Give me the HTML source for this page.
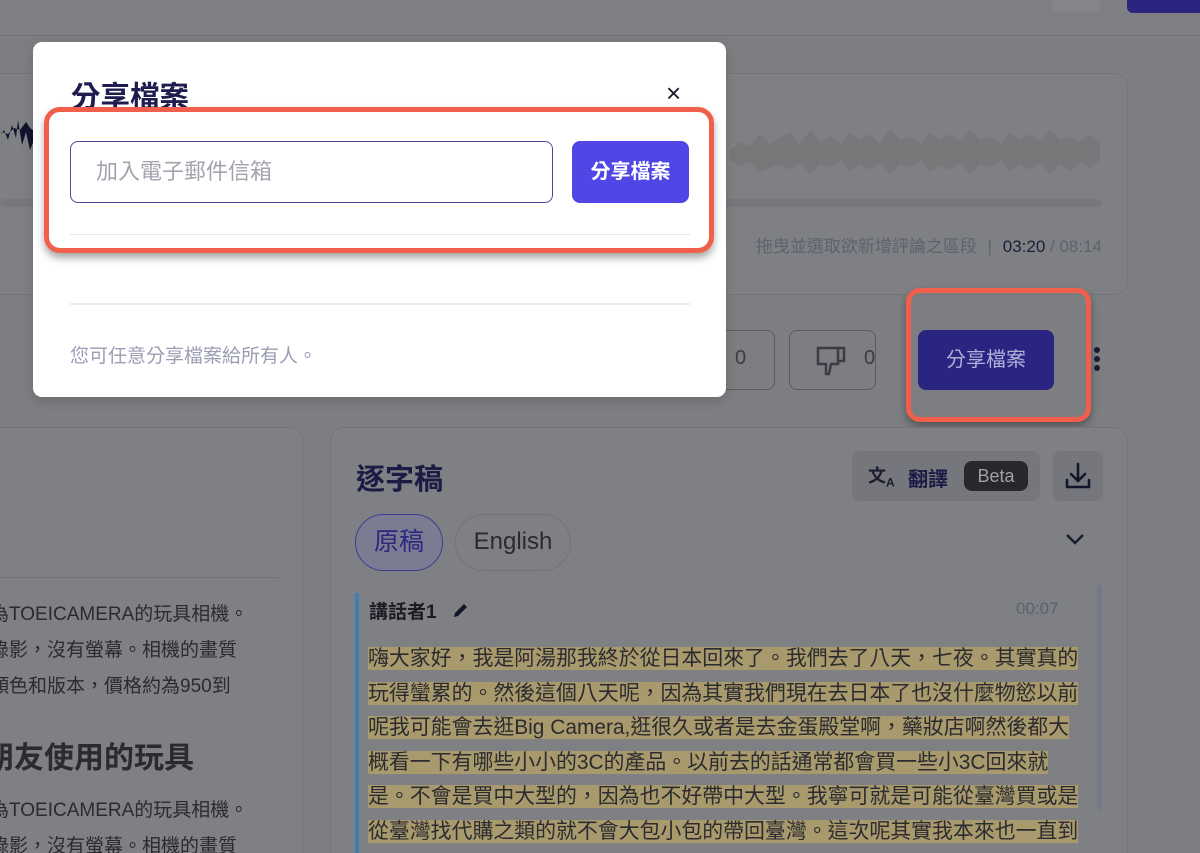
<!DOCTYPE html>
<html style="width:1200px;height:853px;overflow:hidden"><head><meta charset="utf-8"><style>
*{box-sizing:border-box;margin:0;padding:0}
body{width:1200px;height:853px;overflow:hidden;background:#7d7e81;font-family:"Liberation Sans","Noto Sans CJK TC",sans-serif;position:relative}
.abs{position:absolute}
.card{position:absolute;background:#7f8083;border:1px solid #74757a;border-radius:14px}
.hl{background:#a89a6c;color:#2b2b30}
</style></head><body>
<div class="abs" style="left:0;top:0;width:1200px;height:36px;border-bottom:1px solid #717276;background:#7f8083"></div>
<div class="abs" style="left:1052px;top:-8px;width:48px;height:20px;border-radius:6px;background:#83858a"></div>
<div class="abs" style="left:1127px;top:-8px;width:80px;height:21px;border-radius:6px;background:#2b2580"></div>
<div class="card" style="left:-20px;top:73px;width:1148px;height:222px"></div>
<svg class="abs" style="left:0;top:110px" width="1110" height="80">
<path d="M0 25 L4 20 L8 30 L12 15 L16 28 L18 10 L22 35 L26 22 L30 40 L34 30 L38 28 L40 25 L36 22 L30 18 L26 12 L20 20 L14 18 L8 24 L2 22Z" fill="#121230"/>
<path d="M730 40 L740 32 L750 36 L760 24 L770 34 L780 28 L790 22 L800 34 L810 20 L820 32 L830 26 L840 34 L850 22 L860 30 L870 24 L880 34 L890 18 L900 30 L910 26 L920 34 L930 22 L940 30 L950 24 L960 32 L970 20 L980 30 L990 26 L1000 34 L1010 22 L1020 30 L1030 24 L1040 32 L1050 20 L1060 30 L1070 26 L1080 32 L1090 24 L1100 34 L1100 50 L1090 58 L1080 52 L1070 62 L1060 54 L1050 64 L1040 52 L1030 60 L1020 54 L1010 62 L1000 50 L990 58 L980 54 L970 64 L960 52 L950 60 L940 56 L930 62 L920 50 L910 58 L900 54 L890 64 L880 52 L870 60 L860 54 L850 62 L840 50 L830 58 L820 54 L810 64 L800 52 L790 60 L780 54 L770 58 L760 62 L750 52 L740 56 L730 50Z" fill="#78787b"/>
</svg>
<div class="abs" style="left:0;top:199px;width:1102px;height:8px;border-radius:4px;background:#77787d"></div>
<div class="abs" style="right:98px;top:232px;font-size:17px;color:#5f6170;white-space:nowrap">拖曳並選取欲新增評論之區段 <span style="margin:0 6px">|</span> <b style="color:#1e1d3a;font-weight:500">03:20</b> / 08:14</div>
<div class="abs" style="left:700px;top:330px;width:75px;height:60px;border:1.5px solid #5a5b60;border-radius:8px"></div>
<div class="abs" style="left:735px;top:347px;font-size:20px;color:#3a3b44">0</div>
<div class="abs" style="left:789px;top:330px;width:87px;height:60px;border:1.5px solid #5a5b60;border-radius:8px"></div>
<svg class="abs" style="left:815px;top:344px" width="34" height="34" viewBox="0 0 34 34"><path d="M3 4H23V20H16L14 30H11V20H3Z M23 4H29V17H23" fill="none" stroke="#3a3b44" stroke-width="2.5" stroke-linejoin="round"/></svg>
<div class="abs" style="left:864px;top:347px;font-size:20px;color:#3a3b44">0</div>
<div class="abs" style="left:918px;top:330px;width:136px;height:60px;border-radius:8px;background:#2b2582;color:#aeb0d8;font-size:20px;line-height:60px;text-align:center">分享檔案</div>
<div class="abs" style="left:1094px;top:347px;width:6px;height:6px;border-radius:3px;background:#1b1b33;box-shadow:0 9px 0 #1b1b33,0 18px 0 #1b1b33"></div>
<div class="abs" style="left:906px;top:288px;width:185px;height:134px;border:5px solid #f05e4c;border-radius:14px;box-shadow:0 4px 8px rgba(0,0,0,.35)"></div>
<div class="card" style="left:-20px;top:427px;width:323px;height:460px"></div>
<div class="abs" style="left:0;top:577px;width:279px;height:1px;background:#72737a"></div>
<div class="abs" style="left:0;top:597px;font-size:19px;line-height:36px;color:#2a2a30;white-space:nowrap;width:300px;overflow:hidden">
<div style="margin-left:-10px">為TOEICAMERA的玩具相機。</div><div style="margin-left:-10px">錄影，沒有螢幕。相機的畫質</div><div style="margin-left:-10px">顏色和版本，價格約為950到</div>
<div style="margin-left:-16px;margin-top:34px;font-size:30px;font-weight:bold;line-height:40px">朋友使用的玩具</div>
<div style="margin-left:-10px;margin-top:14px">為TOEICAMERA的玩具相機。</div><div style="margin-left:-10px">錄影，沒有螢幕。相機的畫質</div></div>
<div class="card" style="left:330px;top:427px;width:798px;height:460px"></div>
<div class="abs" style="left:356px;top:456px;font-size:29px;font-weight:bold;color:#1c1b45">逐字稿</div>
<div class="abs" style="left:852px;top:451px;width:188px;height:50px;border-radius:8px;background:#75777c"></div>
<div class="abs" style="left:868px;top:462px;font-size:18px;color:#1c1b30;font-weight:bold">文<sub style="font-size:12px">A</sub></div>
<div class="abs" style="left:908px;top:463px;font-size:20px;font-weight:bold;color:#1c1b45">翻譯</div>
<div class="abs" style="left:964px;top:461px;width:64px;height:30px;border-radius:8px;background:#26282d;color:#a0a2a8;font-size:18px;line-height:30px;text-align:center">Beta</div>
<div class="abs" style="left:1053px;top:451px;width:50px;height:50px;border-radius:8px;background:#75777c"></div>
<svg class="abs" style="left:1063px;top:461px" width="30" height="30" viewBox="0 0 30 30"><path d="M15 3V20M8 13L15 20L22 13M4 19V26H26V19" fill="none" stroke="#15152a" stroke-width="2.6" stroke-linecap="round" stroke-linejoin="round"/></svg>
<div class="abs" style="left:355px;top:514px;width:88px;height:57px;border:1.5px solid #3f3a96;border-radius:29px;background:#7b7c92;color:#2c2880;font-size:25px;line-height:54px;text-align:center">原稿</div>
<div class="abs" style="left:455px;top:514px;width:116px;height:57px;border:1.5px solid #727378;border-radius:29px;color:#2a2a30;font-size:24px;line-height:54px;text-align:center">English</div>
<svg class="abs" style="left:1064px;top:531px" width="22" height="16"><path d="M3 4L11 12L19 4" fill="none" stroke="#1b1b30" stroke-width="2.5"/></svg>
<div class="abs" style="left:355px;top:593px;width:4px;height:270px;background:#3e7fb3"></div>
<div class="abs" style="left:1097px;top:585px;width:5px;height:225px;border-radius:3px;background:#75778a"></div>
<div class="abs" style="left:369px;top:597px;font-size:19px;font-weight:bold;color:#1c1c24">講話者1</div>
<svg class="abs" style="left:451px;top:600px" width="20" height="20" viewBox="0 0 20 20"><path d="M3 17L4 13L13 4L16 7L7 16Z" fill="#15152a"/></svg>
<div class="abs" style="left:1016px;top:599px;font-size:17px;color:#5d5f70">00:07</div>
<div class="abs" style="left:368px;top:642px;width:740px;font-size:20.9px;line-height:34.5px;color:#2b2b30;white-space:nowrap">
<span class="hl">嗨大家好，我是阿湯那我終於從日本回來了。我們去了八天，七夜。其實真的</span><br><span class="hl">玩得蠻累的。然後這個八天呢，因為其實我們現在去日本了也沒什麼物慾以前</span><br><span class="hl">呢我可能會去逛Big Camera,逛很久或者是去金蛋殿堂啊，藥妝店啊然後都大</span><br><span class="hl">概看一下有哪些小小的3C的產品。以前去的話通常都會買一些小3C回來就</span><br><span class="hl">是。不會是買中大型的，因為也不好帶中大型。我寧可就是可能從臺灣買或是</span><br><span class="hl">從臺灣找代購之類的就不會大包小包的帶回臺灣。這次呢其實我本來也一直到</span><br><span class="hl">&nbsp;</span></div>
<div class="abs" style="left:33px;top:42px;width:693px;height:355px;background:#fff;border-radius:9px;box-shadow:0 4px 12px rgba(0,0,0,.15)"></div>
<div class="abs" style="left:71px;top:74px;font-size:29.5px;font-weight:bold;color:#1f1d4f">分享檔案</div>
<div class="abs" style="left:666px;top:78px;font-size:26px;color:#1a1a2a">×</div>
<div class="abs" style="left:70px;top:141px;width:483px;height:62px;border:1.5px solid #4c469c;border-radius:8px;padding-left:25px;line-height:60px;font-size:22px;color:#a2a3ad">加入電子郵件信箱</div>
<div class="abs" style="left:572px;top:141px;width:117px;height:62px;border-radius:8px;background:#4f46e5;color:#fff;font-size:20px;font-weight:bold;line-height:62px;text-align:center">分享檔案</div>
<div class="abs" style="left:70px;top:234px;width:620px;height:1px;background:#e5e6ee"></div>
<div class="abs" style="left:44px;top:107px;width:670px;height:146px;border:5px solid #f05e4c;border-radius:16px;box-shadow:0 5px 8px rgba(0,0,0,.35)"></div>
<div class="abs" style="left:70px;top:303px;width:620px;height:2px;background:#ececf2"></div>
<div class="abs" style="left:70px;top:341px;font-size:19px;color:#9b9db4">您可任意分享檔案給所有人。</div>
</body></html>
